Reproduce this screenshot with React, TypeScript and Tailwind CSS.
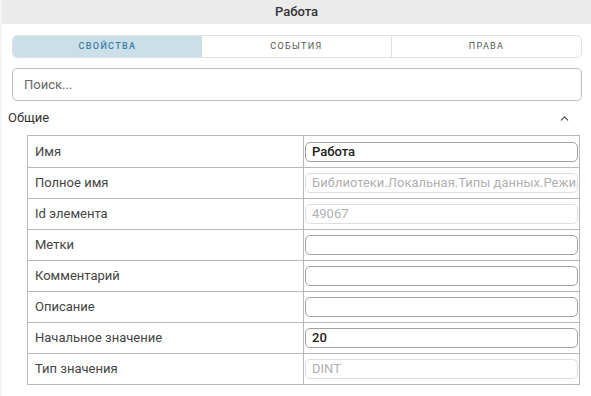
import { ChevronUp } from 'lucide-react';

const rows = [
    { label: 'Имя', value: 'Работа', disabled: false },
    { label: 'Полное имя', value: 'Библиотеки.Локальная.Типы данных.Режим', disabled: true },
    { label: 'Id элемента', value: '49067', disabled: true },
    { label: 'Метки', value: '', disabled: false },
    { label: 'Комментарий', value: '', disabled: false },
    { label: 'Описание', value: '', disabled: false },
    { label: 'Начальное значение', value: '20', disabled: false },
    { label: 'Тип значения', value: 'DINT', disabled: true },
];

export default function App() {
    return (
        <div className="w-[591px] h-[396px] bg-[#f6f6f6] pl-[2px] overflow-hidden" style={{ fontFamily: 'Roboto, "Noto Sans", sans-serif' }}>
            {/* Header */}
            <div className="h-[24px] bg-[#ebebeb] flex items-center justify-center text-[13px] font-medium text-[#333]">
                Работа
            </div>

            <div className="bg-white h-[372px]">
                {/* Tabs */}
                <div className="pt-[11px] px-[10px]">
                    <div className="flex h-[23px] border border-[#e0e0e0] rounded-[5px] overflow-hidden w-[570px]">
                        <div className="flex-1 flex items-center justify-center bg-[#cbdfe8] text-[#3d7ea6] text-[9px] font-medium tracking-[0.15em]">
                            СВОЙСТВА
                        </div>
                        <div className="flex-1 flex items-center justify-center text-[#555] text-[9px] tracking-[0.15em] border-r border-[#e0e0e0]">
                            СОБЫТИЯ
                        </div>
                        <div className="flex-1 flex items-center justify-center text-[#555] text-[9px] tracking-[0.15em]">
                            ПРАВА
                        </div>
                    </div>
                </div>

                {/* Search */}
                <div className="pt-[10px] px-[10px]">
                    <div className="w-[570px] h-[33px] border border-[#bdbdbd] rounded-[5px] flex items-center px-[11px] text-[13px] text-[#666]">
                        Поиск...
                    </div>
                </div>

                {/* Section */}
                <div className="flex items-center justify-between pl-[6px] pr-[20px] h-[34px] text-[13px] text-[#333]">
                    <span>Общие</span>
                    <ChevronUp className="h-[13px] w-[13px] text-[#444]" strokeWidth={2} />
                </div>

                <div className="ml-[25px] w-[553px] border border-[#b8b8b8]">
                    {rows.map((row, i) => (
                        <div key={row.label} className={`flex h-[31px] ${i > 0 ? 'border-t border-[#b8b8b8]' : ''}`}>
                            <div className="w-[276px] shrink-0 border-r border-[#b8b8b8] flex items-center pl-[7px] text-[13px] text-[#444]">
                                {row.label}
                            </div>
                            <div className="flex-1 min-w-0 flex items-center pl-[1px] pr-[1px]">
                                <div
                                    className={`w-full min-w-0 h-[20px] rounded-[5px] border flex items-center px-[6px] text-[13px] overflow-hidden whitespace-nowrap ${row.disabled
                                        ? 'border-[#dedede] text-[#b0b0b0]'
                                        : 'border-[#a0a0a0] text-[#222] font-medium'
                                        }`}
                                >
                                    {row.value}
                                </div>
                            </div>
                        </div>
                    ))}
                </div>
            </div>
        </div>
    );
}
